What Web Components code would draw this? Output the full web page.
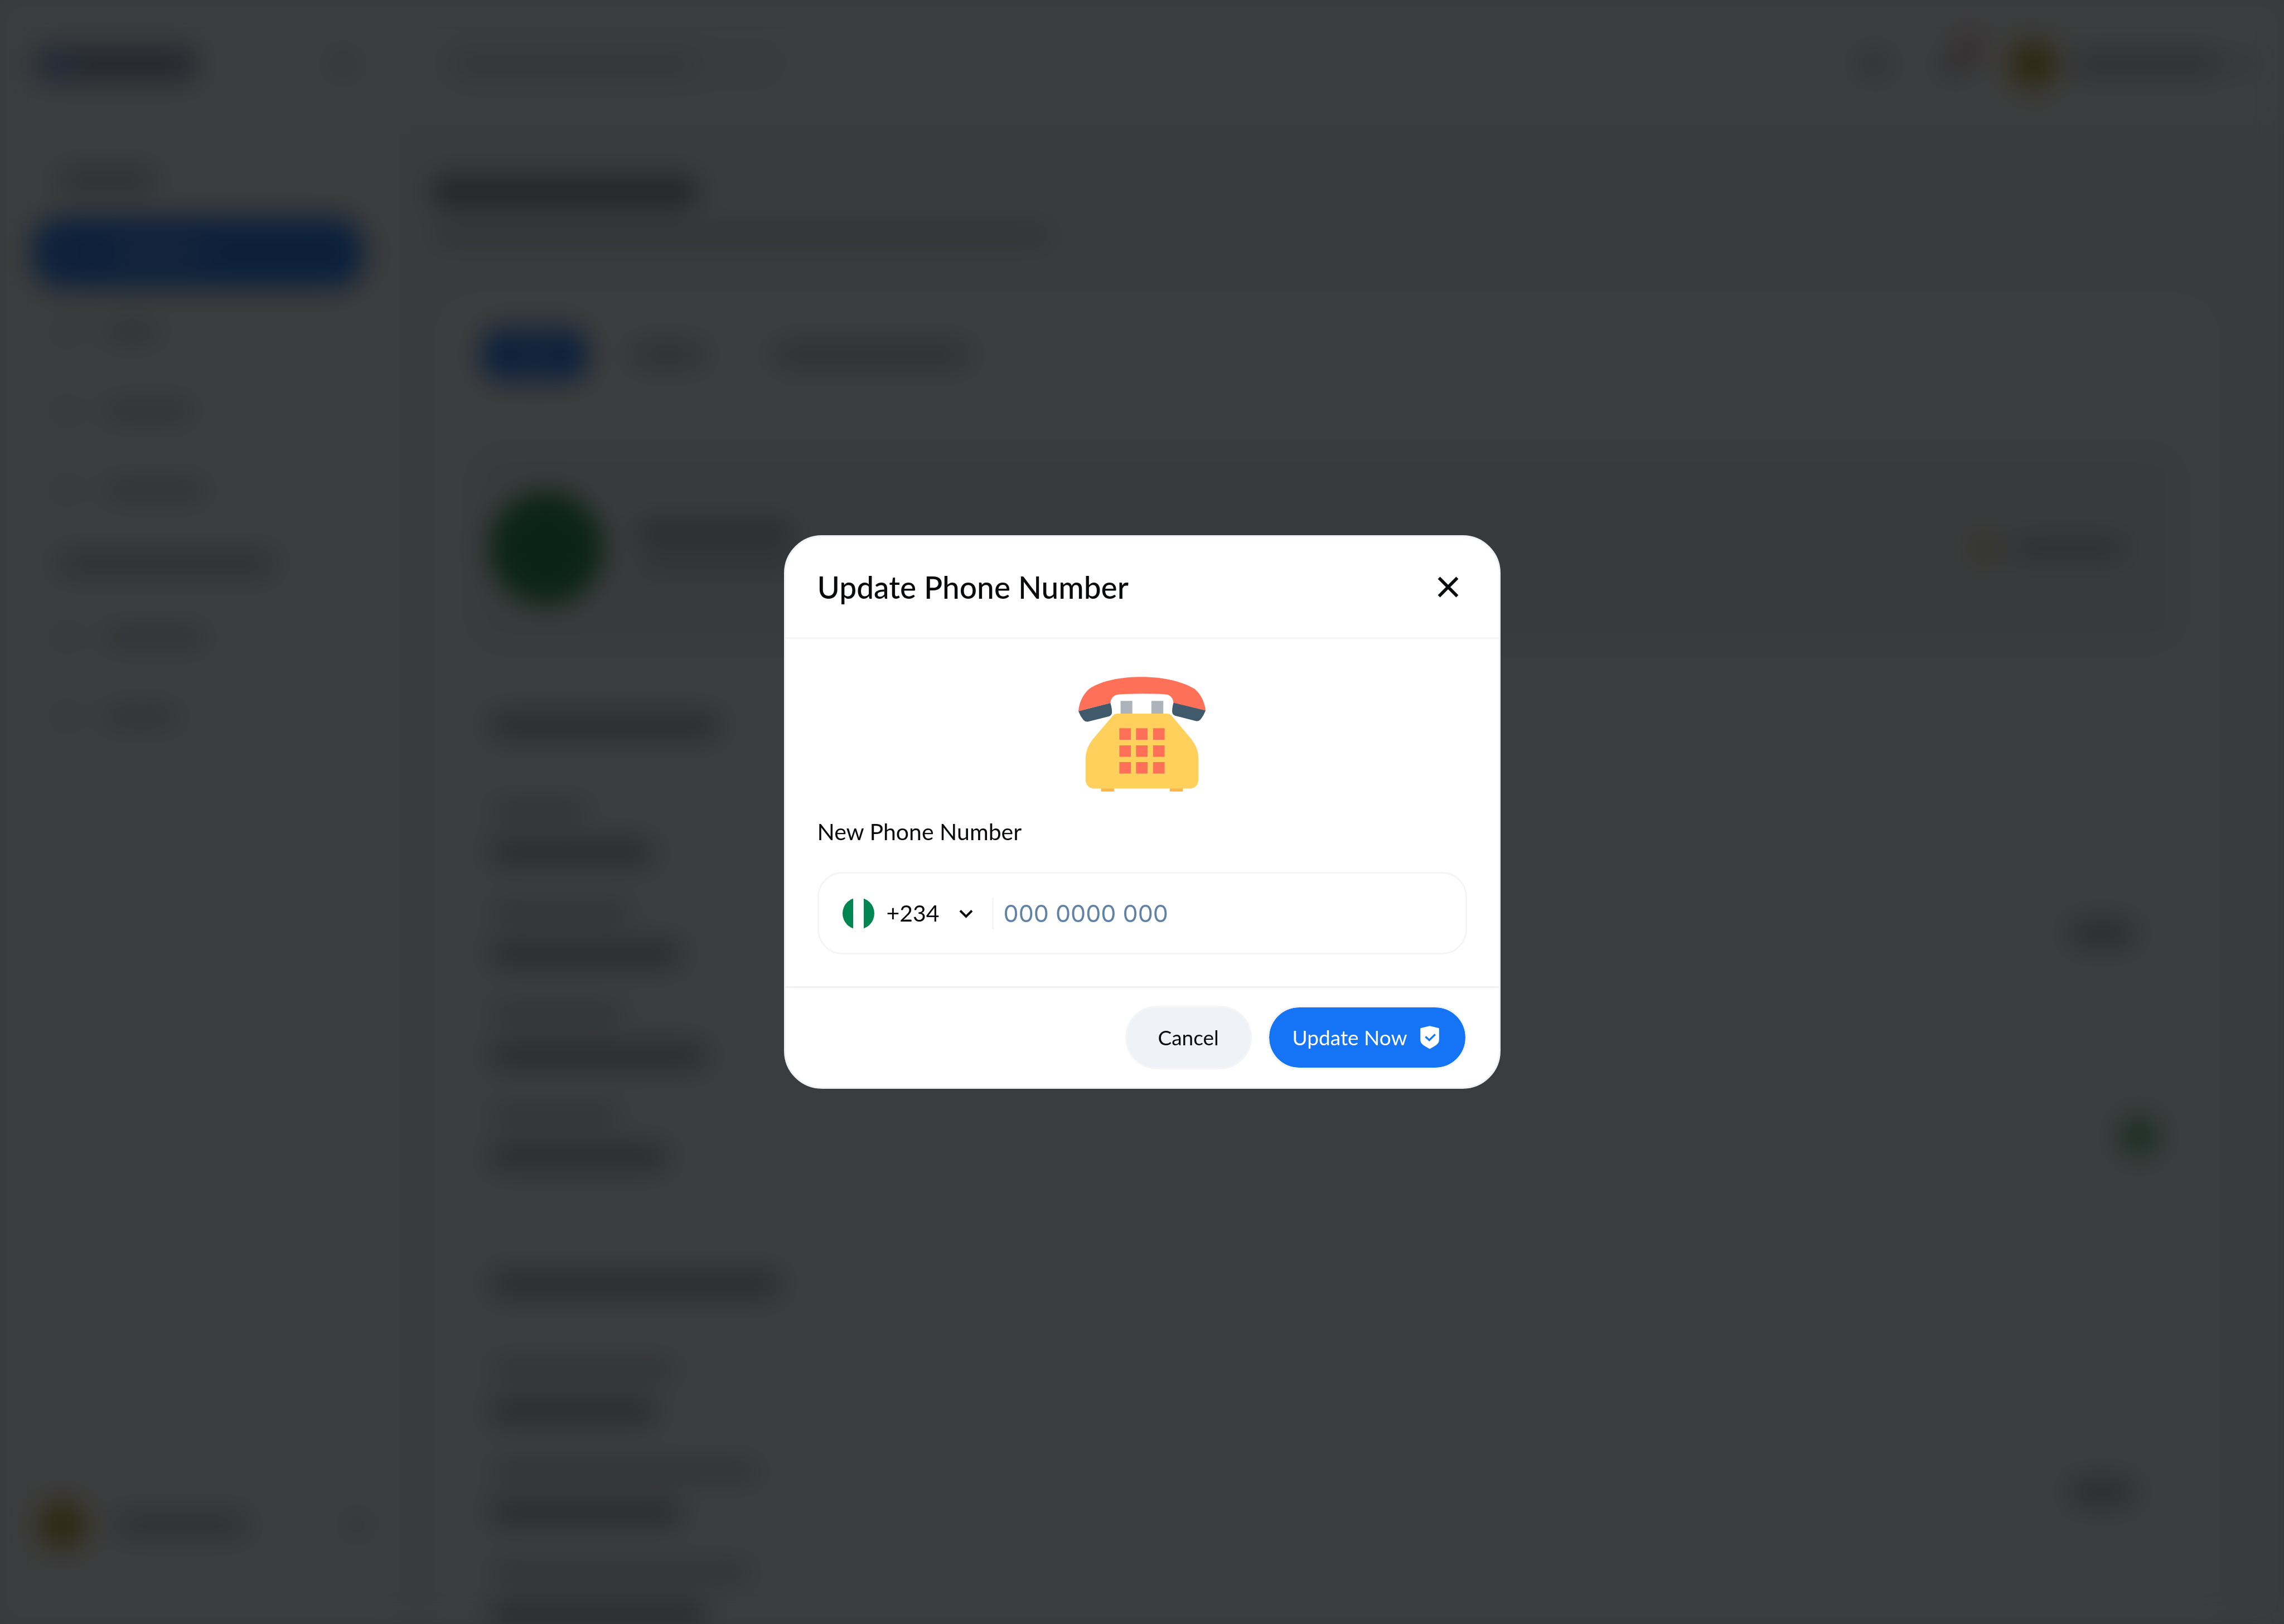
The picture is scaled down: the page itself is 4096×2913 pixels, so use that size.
<!DOCTYPE html>
<html lang="en">
<head>
<meta charset="utf-8">
<meta name="viewport" content="width=device-width, initial-scale=1">
<title>Update Phone Number</title>
<style>
  html, body { margin: 0; height: 100%; }
  body {
    background: #f0f1f3;
    color: #0a0b0d;
    font-family: Lato, "Open Sans", sans-serif;
    overflow: hidden;
  }
</style>
</head>
<body>
<account-page aria-hidden="true" inert></account-page>
<modal-overlay>
  <modal-card heading="Update Phone Number">
    <phone-illustration></phone-illustration>
    <phone-field label="New Phone Number" placeholder="000 0000 000"></phone-field>
    <pill-button slot="actions" kind="quiet">Cancel</pill-button>
    <pill-button slot="actions" kind="primary">Update Now
      <svg slot="icon" viewBox="0 0 20 20" width="56" height="56" aria-hidden="true">
        <path fill="#fff" d="M10 2.600 15.600 3.900Q16 4 16 4.500V11.400C16 14.200 13.400 15.400 10 17.300 6.600 15.400 4 14.200 4 11.400V4.500Q4 4 4.400 3.900Z"/>
        <path fill="none" stroke="#1574f6" stroke-width="1.200" d="M7.300 9.500 9.700 11.700 13.500 8"/>
      </svg>
    </pill-button>
  </modal-card>
</modal-overlay>

<script>
const define = (name, html, setup) => {
  const template = document.createElement('template');
  template.innerHTML = html;
  customElements.define(name, class extends HTMLElement {
    constructor() {
      super();
      this.attachShadow({ mode: 'open' }).append(template.content.cloneNode(true));
    }
    connectedCallback() { if (setup) setup(this, this.shadowRoot); }
  });
};

/* A placeholder line: width in px, tone picks its colour and thickness */
define('text-bar', `
  <style>
    :host { display: block; flex: none; width: var(--w); height: 36px; border-radius: 18px; background: #b6b7ba; }
    :host([tone="strong"]) { height: 40px; background: #a0a1a4; }
    :host([tone="title"]) { height: 56px; background: #88898c; }
    :host([tone="soft"]) { height: 32px; background: #bcd3da; }
    :host([tone="brand"]) { height: 60px; background: linear-gradient(90deg, #829cdc 0 20%, #8c9bb8 30%); }
    :host([tone="inverse"]) { background: #4b8fee; }
    :host([tone="faint"]) { background: #cfd0d3; }
  </style>`, host => host.style.setProperty('--w', host.getAttribute('w') + 'px'));

define('color-dot', `
  <style>:host { display: block; flex: none; width: var(--d); height: var(--d); border-radius: 50%; background: var(--c); }</style>`,
  host => {
    host.style.setProperty('--d', host.getAttribute('d') + 'px');
    host.style.setProperty('--c', host.getAttribute('c'));
  });

define('nav-row', `
  <style>
    :host { display: flex; align-items: center; gap: 44px; height: 142px; box-sizing: border-box; padding-left: 40px; }
    :host([active]) { height: 126px; margin: 8px 0; border-radius: 54px; background: #1574f6; }
  </style>
  <text-bar w="44" tone="soft"></text-bar><text-bar tone="soft"></text-bar>`,
  (host, root) => {
    const [icon, text] = root.querySelectorAll('text-bar');
    text.style.setProperty('--w', host.getAttribute('w') + 'px');
    text.setAttribute('w', host.getAttribute('w'));
    if (host.hasAttribute('active')) { icon.setAttribute('tone', 'inverse'); text.setAttribute('tone', 'inverse'); }
    else icon.style.opacity = '.6';
  });

define('side-nav', `
  <style>
    :host { display: flex; flex-direction: column; width: 705px; flex: none; box-sizing: border-box; padding: 0 52px 98px 58px; background: #fff; }
    .brand { display: flex; align-items: center; justify-content: space-between; height: 230px; padding: 0 18px 0 6px; }
    .caption { display: flex; align-items: center; height: 122px; padding-left: 46px; }
    .first { box-sizing: border-box; padding-top: 34px; height: 152px; }
    .user { display: flex; align-items: center; gap: 48px; margin-top: auto; height: 160px; padding-left: 10px; }
    .user :last-child { margin-left: auto; }
  </style>
  <div class="brand"><text-bar w="288" tone="brand"></text-bar><text-bar w="40" tone="faint"></text-bar></div>
  <div class="caption first"><text-bar w="176"></text-bar></div>
  <nav-row w="190" active></nav-row>
  <nav-row w="100"></nav-row>
  <nav-row w="160"></nav-row>
  <nav-row w="184"></nav-row>
  <div class="caption"><text-bar w="388"></text-bar></div>
  <nav-row w="184"></nav-row>
  <nav-row w="134"></nav-row>
  <div class="user"><color-dot d="88" c="#bfa028"></color-dot><text-bar w="240"></text-bar><text-bar w="28" tone="faint"></text-bar></div>`);

define('top-bar', `
  <style>
    :host { display: flex; align-items: center; height: 212px; box-sizing: border-box; padding: 18px 60px 0 71px; background: #fff; }
    .search { display: flex; align-items: center; width: 650px; height: 120px; padding-left: 34px; box-sizing: border-box; border-radius: 60px; background: #fafafb; }
    .search text-bar { opacity: .75; }
    .tools { display: flex; align-items: center; gap: 96px; margin-left: auto; }
    .bell { position: relative; }
    .bell color-dot { position: absolute; right: -20px; top: -30px; }
    .user { display: flex; align-items: center; gap: 24px; margin-left: -26px; }
  </style>
  <div class="search"><text-bar w="440" tone="soft"></text-bar></div>
  <div class="tools">
    <text-bar w="50"></text-bar>
    <div class="bell"><text-bar w="50"></text-bar><color-dot d="36" c="#e07a80"></color-dot></div>
    <div class="user"><color-dot d="88" c="#bfa028"></color-dot><text-bar w="270"></text-bar><text-bar w="28" tone="faint"></text-bar></div>
  </div>`);

define('detail-row', `
  <style>
    :host { display: flex; align-items: center; justify-content: space-between; height: 182px; }
    .lines > div { display: flex; align-items: center; height: 74px; }
    ::slotted(text-bar) { margin-right: 70px; }
    ::slotted(color-dot) { margin-right: 26px; }
  </style>
  <div class="lines"><div><text-bar tone="soft"></text-bar></div><div><text-bar tone="strong"></text-bar></div></div>
  <slot></slot>`,
  (host, root) => {
    const widths = host.getAttribute('w').split(' ');
    root.querySelectorAll('text-bar').forEach((bar, i) => {
      bar.setAttribute('w', widths[i]);
      bar.style.setProperty('--w', widths[i] + 'px');
    });
  });

define('detail-section', `
  <style>
    :host { display: block; padding: 0 24px 0 42px; margin-bottom: 144px; }
    .title { display: flex; align-items: center; height: 60px; margin-bottom: 70px; }
  </style>
  <div class="title"><text-bar tone="strong"></text-bar></div>
  <slot></slot>`,
  (host, root) => {
    const bar = root.querySelector('text-bar');
    bar.setAttribute('w', host.getAttribute('w'));
    bar.style.setProperty('--w', host.getAttribute('w') + 'px');
  });

define('profile-strip', `
  <style>
    :host { display: flex; align-items: center; gap: 60px; height: 378px; box-sizing: border-box; padding: 0 106px 0 40px; margin-bottom: 99px; border-radius: 60px; background: #f5f6f8; }
    .lines { display: flex; flex-direction: column; gap: 22px; }
    .badge { display: flex; align-items: center; gap: 20px; margin-left: auto; }
  </style>
  <color-dot d="204" c="#118440"></color-dot>
  <div class="lines"><text-bar w="280" tone="strong"></text-bar><text-bar w="300" tone="soft"></text-bar></div>
  <div class="badge"><color-dot d="52" c="#e0cf9c"></color-dot><text-bar w="210"></text-bar></div>`);

define('account-page', `
  <style>
    :host { position: fixed; inset: 0; display: flex; filter: blur(24px); background: #f9fafb; overflow: hidden; }
    main { flex: 1; min-width: 0; }
    .intro { display: flex; flex-direction: column; gap: 34px; padding: 104px 0 0 71px; height: 324px; box-sizing: border-box; }
    .card { margin: 0 128px 0 85px; padding: 48px; box-sizing: border-box; border-radius: 60px 60px 0 0; background: #fff; }
    .tabs { display: flex; align-items: center; height: 104px; margin-bottom: 106px; padding-left: 26px; }
    .tab { display: flex; flex: none; align-items: center; justify-content: center; width: 190px; height: 92px; margin-right: 80px; border-radius: 36px; background: #1574f6; }
    .tabs > text-bar { margin-right: 126px; }
  </style>
  <side-nav></side-nav>
  <main>
    <top-bar></top-bar>
    <div class="intro"><text-bar w="474" tone="title"></text-bar><text-bar w="1110" tone="soft"></text-bar></div>
    <div class="card">
      <div class="tabs"><div class="tab"><text-bar w="80" tone="inverse"></text-bar></div><text-bar w="128"></text-bar><text-bar w="350"></text-bar></div>
      <profile-strip></profile-strip>
      <detail-section w="408">
        <detail-row w="176 290"></detail-row>
        <detail-row w="252 340"><text-bar w="112" tone="strong"></text-bar></detail-row>
        <detail-row w="240 386"></detail-row>
        <detail-row w="232 316"><color-dot d="68" c="#4cb47a"></color-dot></detail-row>
      </detail-section>
      <detail-section w="518">
        <detail-row w="332 296"></detail-row>
        <detail-row w="482 340"><text-bar w="112" tone="strong"></text-bar></detail-row>
        <detail-row w="466 386"></detail-row>
      </detail-section>
    </div>
  </main>`);

define('modal-overlay', `
  <style>:host { position: fixed; inset: 0; display: grid; place-items: center; background: rgba(10, 11, 13, .8); }</style>
  <slot></slot>`);

define('modal-card', `
  <style>
    :host { display: block; width: 1285px; max-width: 100%; box-sizing: border-box; border: 3px solid #eff2f7; border-radius: 68px; background: #fff; overflow: hidden; }
    header { display: flex; align-items: center; justify-content: space-between; height: 180px; padding: 0 57px; border-bottom: 3px solid #f4f5f6; }
    h2 { margin: 0; font-size: 55px; line-height: 72px; font-weight: 500; }
    .close { display: block; width: 68px; height: 68px; padding: 0; border: 0; background: none; }
    .close svg { display: block; }
    .body { display: flex; flex-direction: column; padding: 57px; gap: 34px; }
    footer { display: flex; justify-content: flex-end; gap: 28px; padding: 32px 57px; border-top: 3px solid #eff1f7; }
  </style>
  <section role="dialog" aria-modal="true" aria-labelledby="heading">
    <header>
      <h2 id="heading"></h2>
      <button class="close" type="button" aria-label="Close">
        <svg viewBox="0 0 24 24" width="68" height="68"><path d="M6.200 6.200 17.800 17.800M17.800 6.200 6.200 17.800" fill="none" stroke="#0a0b0d" stroke-width="2"/></svg>
      </button>
    </header>
    <div class="body"><slot></slot></div>
    <footer><slot name="actions"></slot></footer>
  </section>`,
  (host, root) => { root.querySelector('h2').textContent = host.getAttribute('heading'); });

define('phone-illustration', `
  <style>:host { display: flex; justify-content: center; padding: 11px 0; } svg { display: block; }</style>
  <svg viewBox="120 83 960 866" width="228" height="206" aria-hidden="true">
    <path fill="#f9b54c" d="M291 920h99v29h-99zM810 920h99v29h-99z"/>
    <path fill="#acb3ba" d="M438 264h89v100h-89zM671 264h90v100h-90z"/>
    <path fill="#ffd15c" d="M412 360H790Q810 360 824 376L970 550Q1026 618 1026 694V862Q1022 922 960 927H240Q180 922 174 862V694Q176 618 232 550L378 378Q392 362 412 360Z"/>
    <path fill="#ff7058" d="M120 342C126 270 160 208 204 172C290 114 430 83 600 83C770 83 910 120 998 174C1044 212 1076 280 1080 338L838 280C836 244 814 220 784 216Q740 210 600 210Q460 210 414 217C384 222 362 250 362 280Z"/>
    <path fill="#40596b" d="M120 342 362 280Q374 320 373 354Q370 374 350 381L196 420Q174 426 158 409Q134 380 120 342ZM1080 337 838 278Q827 310 828 350Q832 370 850 376L1006 416Q1026 421 1041 406Q1068 372 1080 337Z"/>
    <path fill="#ff7058" d="M429 471h87v87h-87zM555 471h87v87h-87zM684 471h87v87h-87zM429 600h87v86h-87zM555 600h87v86h-87zM684 600h87v86h-87zM429 727h87v86h-87zM555 727h87v86h-87zM684 727h87v86h-87z"/>
  </svg>`);

define('phone-field', `
  <style>
    :host { display: flex; flex-direction: column; gap: 45px; }
    label { font-size: 41px; line-height: 54px; }
    .box { display: flex; align-items: center; gap: 18px; height: 148px; box-sizing: border-box; padding: 0 42px; border: 3px solid #f4f5f6; border-radius: 45px; }
    .flag { flex: none; width: 57px; height: 57px; margin-right: 4px; border-radius: 50%; background: linear-gradient(90deg, #008751 0 33.300%, #fff 33.300% 66.600%, #008751 66.600%); }
    select, input { height: 57px; padding: 0; border: 0; background: none; outline: 0; color: #0a0b0d; line-height: 56px; }
    select { appearance: none; flex: none; font-family: inherit; font-size: 41px; }
    input { flex: 1; min-width: 0; border-radius: 0; font-family: Inter, sans-serif; font-size: 43px; }
    input::placeholder { color: #5f82a6; opacity: 1; }
    svg { display: block; flex: none; }
    .rule { flex: none; width: 3px; height: 57px; background: #f4f5f6; }
  </style>
  <label for="number"></label>
  <div class="box">
    <span class="flag"></span>
    <select aria-label="Country code"><option>+234</option></select>
    <svg viewBox="0 0 57 57" width="57" height="57" aria-hidden="true"><path d="M18 23.500 28.500 34 39 23.500" fill="none" stroke="#0a0b0d" stroke-width="4"/></svg>
    <span class="rule"></span>
    <input id="number" type="tel">
  </div>`,
  (host, root) => {
    root.querySelector('label').textContent = host.getAttribute('label');
    root.querySelector('input').placeholder = host.getAttribute('placeholder');
  });

define('pill-button', `
  <style>
    :host { display: block; }
    button { display: flex; align-items: center; justify-content: center; gap: 12px; min-width: 227px; height: 114px; box-sizing: border-box; padding: 0 42px; border: 3px solid #f4f5f6; border-radius: 57px; background: #eff2f7; color: #0a0b0d; font-family: inherit; font-size: 37px; line-height: 48px; }
    :host([kind="primary"]) button { min-width: 356px; padding: 0 36px 0 42px; background: #1574f6; background-clip: padding-box; color: #fff; }
    ::slotted(svg) { display: block; flex: none; }
  </style>
  <button type="button"><span><slot></slot></span><slot name="icon"></slot></button>`);
</script>
</body>
</html>
